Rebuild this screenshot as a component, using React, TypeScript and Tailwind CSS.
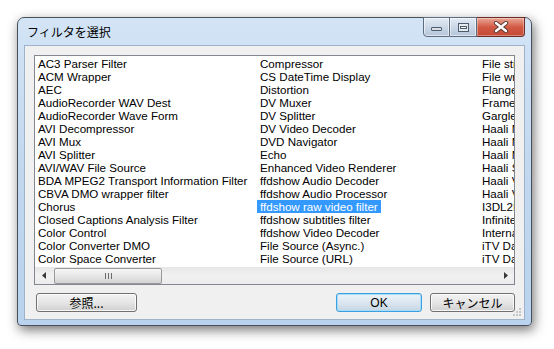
import React from 'react'

const col1 = [
  'AC3 Parser Filter',
  'ACM Wrapper',
  'AEC',
  'AudioRecorder WAV Dest',
  'AudioRecorder Wave Form',
  'AVI Decompressor',
  'AVI Mux',
  'AVI Splitter',
  'AVI/WAV File Source',
  'BDA MPEG2 Transport Information Filter',
  'CBVA DMO wrapper filter',
  'Chorus',
  'Closed Captions Analysis Filter',
  'Color Control',
  'Color Converter DMO',
  'Color Space Converter',
]

const col2 = [
  'Compressor',
  'CS DateTime Display',
  'Distortion',
  'DV Muxer',
  'DV Splitter',
  'DV Video Decoder',
  'DVD Navigator',
  'Echo',
  'Enhanced Video Renderer',
  'ffdshow Audio Decoder',
  'ffdshow Audio Processor',
  'ffdshow raw video filter',
  'ffdshow subtitles filter',
  'ffdshow Video Decoder',
  'File Source (Async.)',
  'File Source (URL)',
]

// third column is cut off by the list box edge, like in the real dialog
const col3 = [
  'File stream renderer',
  'File writer',
  'Flanger',
  'Frame Eater',
  'Gargle',
  'Haali Matroska Muxer',
  'Haali Media Splitter',
  'Haali Media Splitter (AR)',
  'Haali Simple Media Splitter',
  'Haali Video Renderer',
  'Haali Video Sink',
  'I3DL2Reverb',
  'Infinite Pin Tee Filter',
  'Internal Script Command Renderer',
  'iTV Data Capture filter',
  'iTV Data Sink',
]

const SELECTED = 'ffdshow raw video filter'

function Column({ items }: { items: string[] }) {
  return (
    <div className="w-[222px] shrink-0 flex flex-col">
      {items.map((t) => (
        <div key={t} className="h-[13px] leading-[13px] whitespace-nowrap">
          <span
            className={
              t === SELECTED
                ? 'inline-block h-[13px] px-[3px] bg-[#3399ff] text-white'
                : 'inline-block h-[13px] px-[3px]'
            }
          >
            {t}
          </span>
        </div>
      ))}
    </div>
  )
}

export default function App() {
  return (
    <div className="w-[554px] h-[349px] bg-white pt-[17px] pl-[17px] overflow-hidden">
      {/* window frame */}
      <div className="w-[515px] h-[309px] flex flex-col rounded-t-[7px] rounded-b-[4px] border border-[#48505c] bg-gradient-to-b from-[#d3e4f6] via-[#c1d8ef] to-[#b9d3ee] shadow-[2px_4px_12px_rgba(0,0,0,0.55)]">
        {/* title bar */}
        <div className="h-[27px] flex items-start shrink-0">
          <div className="flex-1 h-[27px] pl-[9px] flex items-center text-[12px] text-black font-['Noto_Sans_CJK_JP',sans-serif]">
            フィルタを選択
          </div>
          <div className="flex -mt-px mr-[6px]">
            <div className="w-[27px] h-[20px] border border-[#5d6c80] rounded-bl-[4px] bg-gradient-to-b from-[#e2ebf5] via-[#cbd8e7] to-[#b4c5da] shadow-[inset_0_0_0_1px_rgba(255,255,255,0.55)] flex items-end justify-center pb-[5px]">
              <div className="w-[11px] h-[4px] border border-[#4d5b6c] bg-[#d8dee6] rounded-[1px]" />
            </div>
            <div className="w-[27px] h-[20px] border-y border-r border-[#5d6c80] bg-gradient-to-b from-[#e2ebf5] via-[#cbd8e7] to-[#b4c5da] shadow-[inset_0_0_0_1px_rgba(255,255,255,0.55)] flex items-center justify-center">
              <div className="w-[11px] h-[9px] border border-[#4d5b6c] bg-[#e6ebf0] flex items-center justify-center">
                <div className="w-[7px] h-[3px] border border-[#4d5b6c] bg-[#f5f7fa]" />
              </div>
            </div>
            <div className="w-[48px] h-[20px] border-y border-r border-[#6e2c22] rounded-br-[4px] bg-gradient-to-b from-[#e8a897] via-[#d25a45] to-[#c44a36] shadow-[inset_0_0_0_1px_rgba(255,255,255,0.35)] flex items-center justify-center">
              <svg width="16" height="12" viewBox="0 0 16 12">
                <path d="M3 2 L13 10 M13 2 L3 10" stroke="#5a3a36" strokeWidth="4.2" strokeLinecap="round" />
                <path d="M3 2 L13 10 M13 2 L3 10" stroke="#ffffff" strokeWidth="2.4" strokeLinecap="round" />
              </svg>
            </div>
          </div>
        </div>

        {/* client area */}
        <div className="relative ml-[6px] w-[501px] h-[275px] border border-[#9fb2c8] bg-[#f0f0f0] flex flex-col">
          {/* list box */}
          <div className="ml-[9px] mt-[9px] w-[481px] h-[230px] border border-[#828790] bg-white flex flex-col">
            <div className="h-[211px] pt-px overflow-hidden flex text-[11.6px] text-black font-['Liberation_Sans',sans-serif]">
              <Column items={col1} />
              <Column items={col2} />
              <Column items={col3} />
            </div>
            {/* horizontal scrollbar */}
            <div className="h-[17px] flex items-center bg-gradient-to-b from-[#e6e6e6] via-[#f1f1f1] to-[#ececec]">
              <div className="w-[17px] h-[17px] flex items-center justify-center">
                <svg width="4" height="7" viewBox="0 0 4 7">
                  <path d="M4 0 L0 3.5 L4 7 Z" fill="#3a3a3a" />
                </svg>
              </div>
              <div className="ml-[2px] w-[108px] h-[16px] rounded-[2px] border border-[#9a9a9a] bg-gradient-to-b from-[#f6f6f6] via-[#e7e7e7] to-[#d4d4d4] flex items-center justify-center gap-[2px]">
                <div className="w-px h-[6px] bg-[#6a6a6a]" />
                <div className="w-px h-[6px] bg-[#6a6a6a]" />
                <div className="w-px h-[6px] bg-[#6a6a6a]" />
              </div>
              <div className="flex-1" />
              <div className="w-[17px] h-[17px] flex items-center justify-center">
                <svg width="4" height="7" viewBox="0 0 4 7">
                  <path d="M0 0 L4 3.5 L0 7 Z" fill="#3a3a3a" />
                </svg>
              </div>
            </div>
          </div>

          {/* buttons */}
          <div className="mt-[8px] flex items-center pl-[11px] pr-[9px] text-[12px] text-black">
            <div className="w-[101px] h-[19px] rounded-[3px] border border-[#707070] bg-gradient-to-b from-[#f2f2f2] via-[#e6e6e6] to-[#d0d0d0] shadow-[inset_0_0_0_1px_rgba(255,255,255,0.8)] flex items-center justify-center font-['Noto_Sans_CJK_JP',sans-serif] leading-none">
              参照...
            </div>
            <div className="flex-1" />
            <div className="w-[86px] h-[19px] rounded-[3px] border border-[#3c9fe0] bg-gradient-to-b from-[#ecf3f9] via-[#dbe6f0] to-[#c7d6e4] shadow-[inset_0_0_0_1px_rgba(160,220,250,0.9)] flex items-center justify-center font-['Liberation_Sans',sans-serif] leading-none">
              OK
            </div>
            <div className="ml-[8px] w-[85px] h-[19px] rounded-[3px] border border-[#707070] bg-gradient-to-b from-[#f2f2f2] via-[#e6e6e6] to-[#d0d0d0] shadow-[inset_0_0_0_1px_rgba(255,255,255,0.8)] flex items-center justify-center font-['Noto_Sans_CJK_JP',sans-serif] leading-none">
              キャンセル
            </div>
          </div>

          {/* size grip */}
          <svg className="absolute right-[2px] bottom-[2px]" width="10" height="10" viewBox="0 0 10 10">
            <rect x="7" y="1" width="2" height="2" fill="#c5c5c5" />
            <rect x="4" y="4" width="2" height="2" fill="#c5c5c5" />
            <rect x="7" y="4" width="2" height="2" fill="#c5c5c5" />
            <rect x="1" y="7" width="2" height="2" fill="#c5c5c5" />
            <rect x="4" y="7" width="2" height="2" fill="#c5c5c5" />
            <rect x="7" y="7" width="2" height="2" fill="#c5c5c5" />
          </svg>
        </div>
      </div>
    </div>
  )
}
